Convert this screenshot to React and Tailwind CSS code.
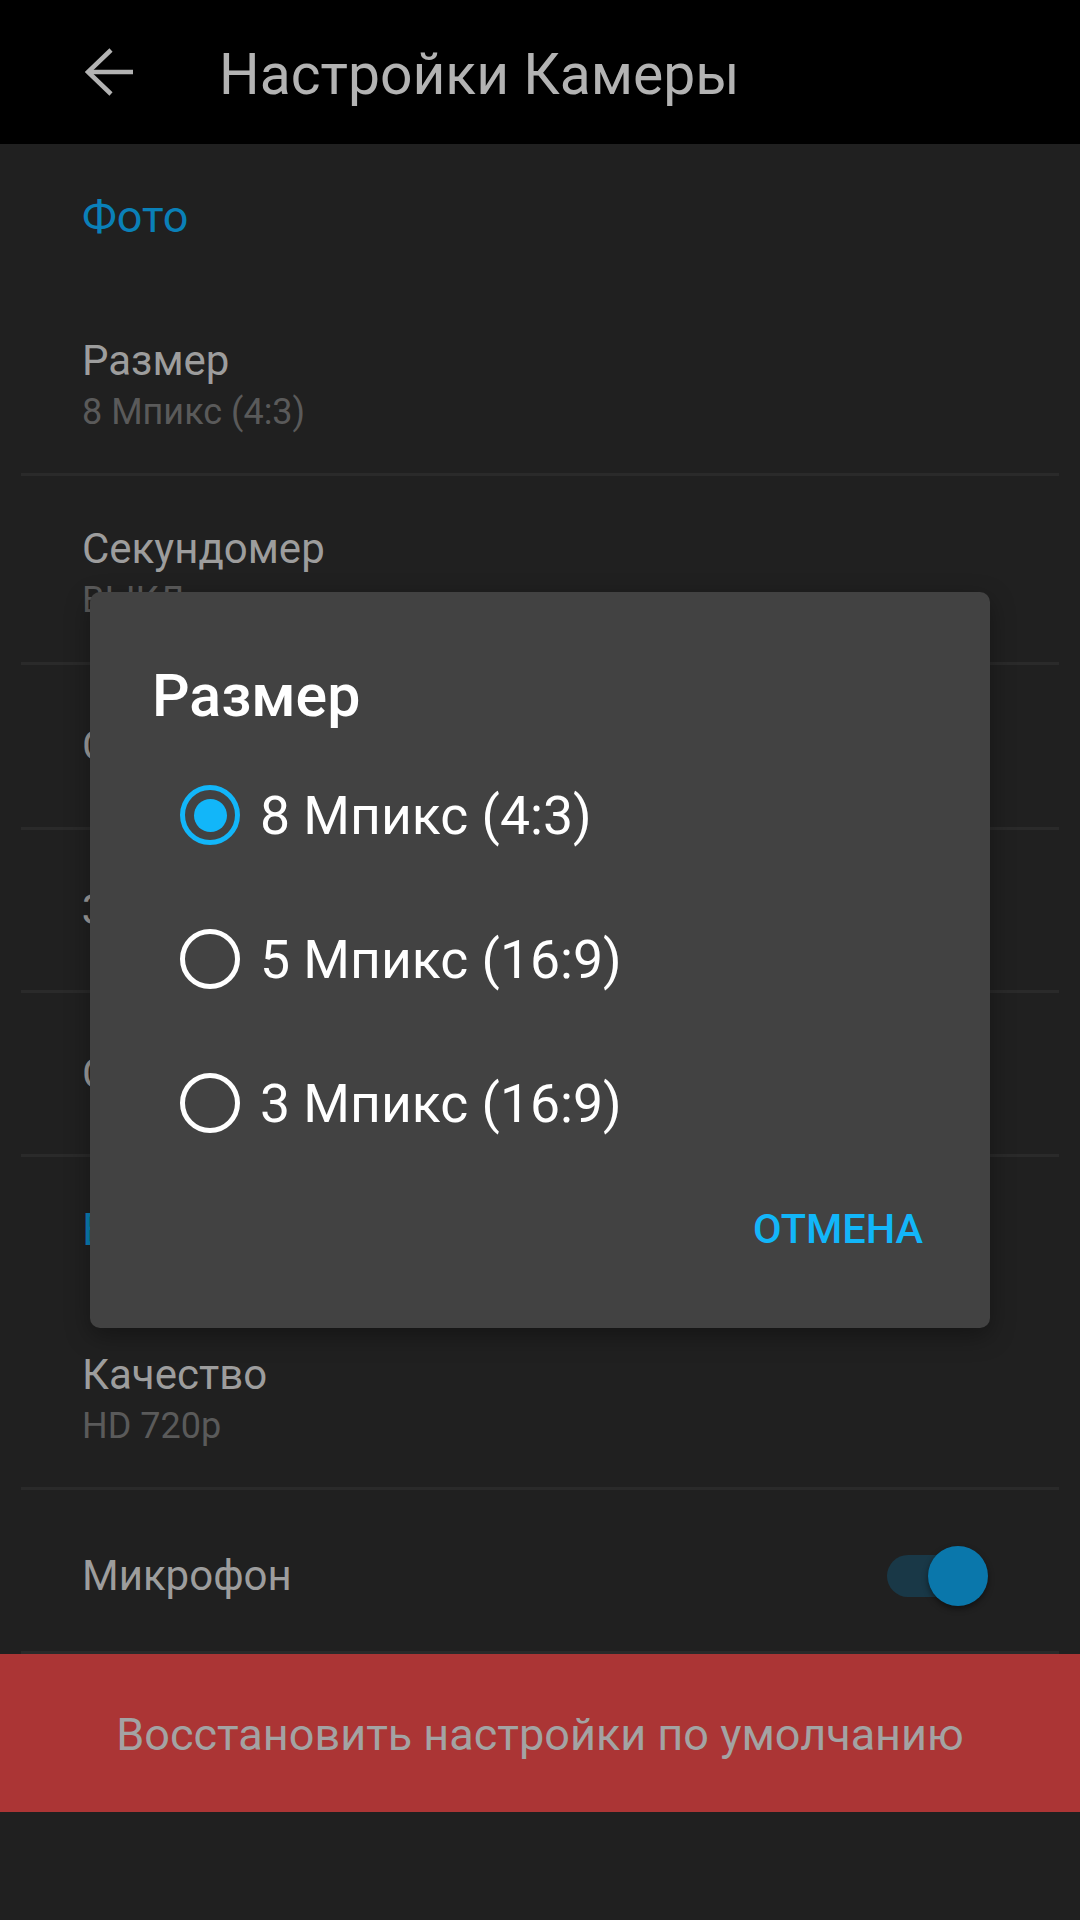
import React from 'react'

// Camera settings screen with the "Размер" picker dialog open.
// Colours behind the dialog are already the dimmed (scrimmed) ones.

const sizes = ['8 Мпикс (4:3)', '5 Мпикс (16:9)', '3 Мпикс (16:9)']

export default function App() {
  return (
    <div className="relative h-[1920px] w-[1080px] overflow-hidden bg-[#202020] font-[Roboto,sans-serif]">
      {/* Toolbar */}
      <header className="flex h-[144px] items-center bg-black pl-[85px]">
        <BackArrow />
        <h1 className="ml-[86px] mt-[4px] text-[57px] leading-none text-[#b3b3b3]">Настройки Камеры</h1>
      </header>

      <Category label="Фото" />
      <Pref title="Размер" summary="8 Мпикс (4:3)" className="h-[183px] pt-[7px]" />
      <Divider />
      <Pref title="Секундомер" summary="ВЫКЛ" className="h-[186px] pt-[8px]" />
      <Divider />
      <Pref title="Сетка" className="h-[162px]" />
      <Divider />
      <Pref title="Звук затвора" className="h-[160px]" />
      <Divider />
      <Pref title="Сохранять место" className="h-[161px]" />
      <Divider />

      <Category label="Видео" />
      <Pref title="Качество" summary="HD 720p" className="h-[184px] pt-[7px]" />
      <Divider />
      <div className="flex h-[161px] items-center justify-between pl-[82px] pr-[92px] pt-[10px]">
        <span className="text-[42px] leading-[50px] text-[#9d9d9d]">Микрофон</span>
        <Toggle />
      </div>
      <Divider />

      <button className="flex h-[158px] w-full items-center justify-center bg-[#ab3535] pt-[4px] text-[45px] text-[#a3a3a3]">
        Восстановить настройки по умолчанию
      </button>

      {/* Dialog */}
      <div className="absolute inset-0 flex items-center justify-center">
        <div className="w-[900px] rounded-[10px] bg-[#424242] pb-[75px] pt-[70px] shadow-[0_8px_24px_rgba(0,0,0,0.35)]">
          <h2 className="pl-[62px] text-[59px] font-medium leading-[68px] text-white">Размер</h2>
          <div className="mt-[13px]">
            {sizes.map((s, i) => (
              <div key={s} className="flex h-[144px] items-center gap-[20px] pl-[90px]">
                <Radio selected={i === 0} />
                <span className="pt-[2px] text-[53.5px] leading-[62px] text-white">{s}</span>
              </div>
            ))}
          </div>
          <div className="mt-[30px] flex justify-end pr-[67px]">
            <button className="text-[41.5px] font-medium leading-[48px] text-[#12b6f9]">ОТМЕНА</button>
          </div>
        </div>
      </div>
    </div>
  )
}

function BackArrow() {
  return (
    <svg width="48" height="48" viewBox="0 0 48 48" fill="none" stroke="#b3b3b3" strokeWidth="4.5">
      <polyline points="26,2 3,24 26,46" />
      <line x1="3" y1="24" x2="48" y2="24" />
    </svg>
  )
}

function Category({ label }) {
  return (
    <div className="flex h-[146px] items-center pl-[82px] text-[45px] text-[#0a80b8]">{label}</div>
  )
}

function Pref({ title, summary, className }) {
  return (
    <div className={`flex flex-col justify-center pl-[82px] ${className}`}>
      <span className="text-[42px] leading-[50px] text-[#9d9d9d]">{title}</span>
      {summary && <span className="mt-[4px] text-[36px] leading-[44px] text-[#5a5a5a]">{summary}</span>}
    </div>
  )
}

function Divider() {
  return <div className="mx-[21px] h-[3px] bg-[#2a2a2a]" />
}

function Radio({ selected }) {
  return (
    <span
      className={`flex h-[60px] w-[60px] shrink-0 items-center justify-center rounded-full border-[5px] ${
        selected ? 'border-[#12b6f9]' : 'border-white'
      }`}
    >
      {selected && <span className="h-[33px] w-[33px] rounded-full bg-[#12b6f9]" />}
    </span>
  )
}

function Toggle() {
  return (
    <div className="relative h-[60px] w-[101px]">
      <div className="absolute left-0 top-[9px] h-[42px] w-[90px] rounded-full bg-[#193847]" />
      <div className="absolute right-0 top-0 h-[60px] w-[60px] rounded-full bg-[#0a77ab] shadow-[0_3px_6px_rgba(0,0,0,0.45)]" />
    </div>
  )
}
